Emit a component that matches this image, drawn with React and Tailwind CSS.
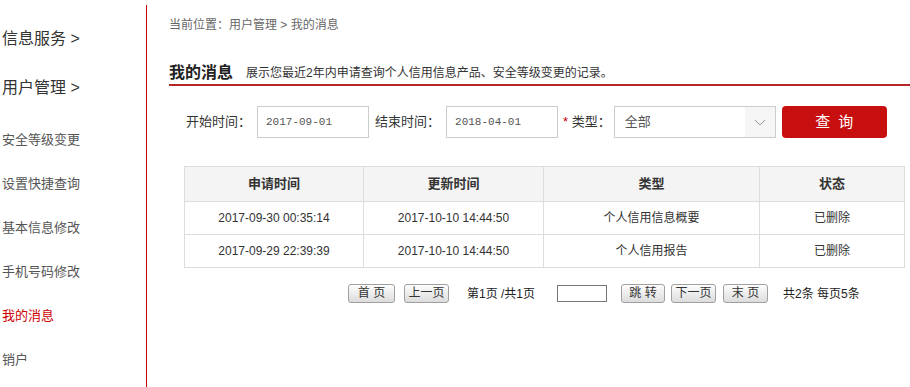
import React from 'react';

const cjk = { fontFamily: '"Liberation Sans", "Noto Sans CJK SC", sans-serif' };

const SideLink = ({ children, active }) => (
  <div className={`h-[44px] leading-[44px] text-[13px] ${active ? 'text-[#cc0000]' : 'text-[#555]'}`}>{children}</div>
);

const PageBtn = ({ children, w }) => (
  <button
    className={`${w} h-[19px] text-[12px] leading-[17px] text-[#333] border border-[#a0a0a0] rounded-[3px] bg-gradient-to-b from-[#fdfdfd] to-[#dcdcdc]`}
  >
    {children}
  </button>
);

const rows = [
  ['2017-09-30 00:35:14', '2017-10-10 14:44:50', '个人信用信息概要', '已删除'],
  ['2017-09-29 22:39:39', '2017-10-10 14:44:50', '个人信用报告', '已删除'],
];

export default function App() {
  return (
    <div className="flex w-[910px] h-[387px] bg-white overflow-hidden" style={cjk}>
      {/* sidebar */}
      <div className="w-[147px] shrink-0 mt-[5px] border-r border-[#cc0000] pl-[2px] pt-[9px]">
        <div className="h-[49px] leading-[49px] text-[16px] text-[#333]">信息服务 &gt;</div>
        <div className="h-[49px] leading-[49px] text-[16px] text-[#333]">用户管理 &gt;</div>
        <div className="mt-[6px]">
          <SideLink>安全等级变更</SideLink>
          <SideLink>设置快捷查询</SideLink>
          <SideLink>基本信息修改</SideLink>
          <SideLink>手机号码修改</SideLink>
          <SideLink active>我的消息</SideLink>
          <SideLink>销户</SideLink>
        </div>
      </div>

      {/* main */}
      <div className="flex-1 pl-[22px]">
        <div className="pt-[17px] text-[12px] leading-[16px] text-[#666]">当前位置：用户管理 &gt; 我的消息</div>

        <div className="mt-[29px] h-[24px] flex items-center border-b-2 border-[#b52626]">
          <span className="text-[16px] font-bold text-[#222]">我的消息</span>
          <span className="ml-[13px] text-[12px] text-[#333]">展示您最近2年内申请查询个人信用信息产品、安全等级变更的记录。</span>
        </div>

        <div className="mt-[20px] pl-[17px] flex items-center h-[32px] text-[13px] text-[#333]">
          <span>开始时间：</span>
          <div className="ml-[6px] w-[112px] h-[32px] border border-[#ccc] pl-[8px] flex items-center text-[11px] text-[#555]" style={{ fontFamily: '"Liberation Mono", monospace' }}>2017-09-01</div>
          <span className="ml-[6px]">结束时间：</span>
          <div className="ml-[6px] w-[112px] h-[32px] border border-[#ccc] pl-[8px] flex items-center text-[11px] text-[#555]" style={{ fontFamily: '"Liberation Mono", monospace' }}>2018-04-01</div>
          <span className="ml-[5px]"><span className="text-[#cc0000]">*</span> 类型：</span>
          <div className="ml-[3px] w-[162px] h-[32px] border border-[#ccc] flex items-center">
            <span className="flex-1 pl-[10px] text-[13px] text-[#555]">全部</span>
            <span className="w-[30px] h-full bg-[#f5f5f5] flex items-center justify-center">
              <svg width="12" height="7" viewBox="0 0 12 7"><path d="M1 1l5 5 5-5" fill="none" stroke="#999" strokeWidth="1" /></svg>
            </span>
          </div>
          <button className="ml-[6px] w-[105px] h-[32px] rounded-[4px] bg-[#c80f0f] text-white text-[15px] tracking-[8px] pl-[8px]">查询</button>
        </div>

        <table className="mt-[28px] ml-[15px] w-[721px] border-collapse text-[#333]">
          <thead>
            <tr className="h-[35px] bg-[#f4f4f4]">
              <th className="w-[179px] border border-[#ddd] text-[13px] font-bold">申请时间</th>
              <th className="w-[180px] border border-[#ddd] text-[13px] font-bold">更新时间</th>
              <th className="w-[216px] border border-[#ddd] text-[13px] font-bold">类型</th>
              <th className="border border-[#ddd] text-[13px] font-bold">状态</th>
            </tr>
          </thead>
          <tbody>
            {rows.map((r, i) => (
              <tr key={i} className="h-[33px]">
                {r.map((c, j) => (
                  <td key={j} className="border border-[#ddd] text-center text-[12px]">{c}</td>
                ))}
              </tr>
            ))}
          </tbody>
        </table>

        <div className="mt-[16px] ml-[179px] flex items-center text-[12px] text-[#222]">
          <PageBtn w="w-[47px]">首 页</PageBtn>
          <span className="ml-[9px]"><PageBtn w="w-[45px]">上一页</PageBtn></span>
          <span className="ml-[18px]">第1页 /共1页</span>
          <span className="ml-[22px] w-[50px] h-[17px] border border-[#777] bg-white" />
          <span className="ml-[14px]"><PageBtn w="w-[44px]">跳 转</PageBtn></span>
          <span className="ml-[6px]"><PageBtn w="w-[45px]">下一页</PageBtn></span>
          <span className="ml-[7px]"><PageBtn w="w-[45px]">末 页</PageBtn></span>
          <span className="ml-[15px]">共2条 每页5条</span>
        </div>
      </div>
    </div>
  );
}
